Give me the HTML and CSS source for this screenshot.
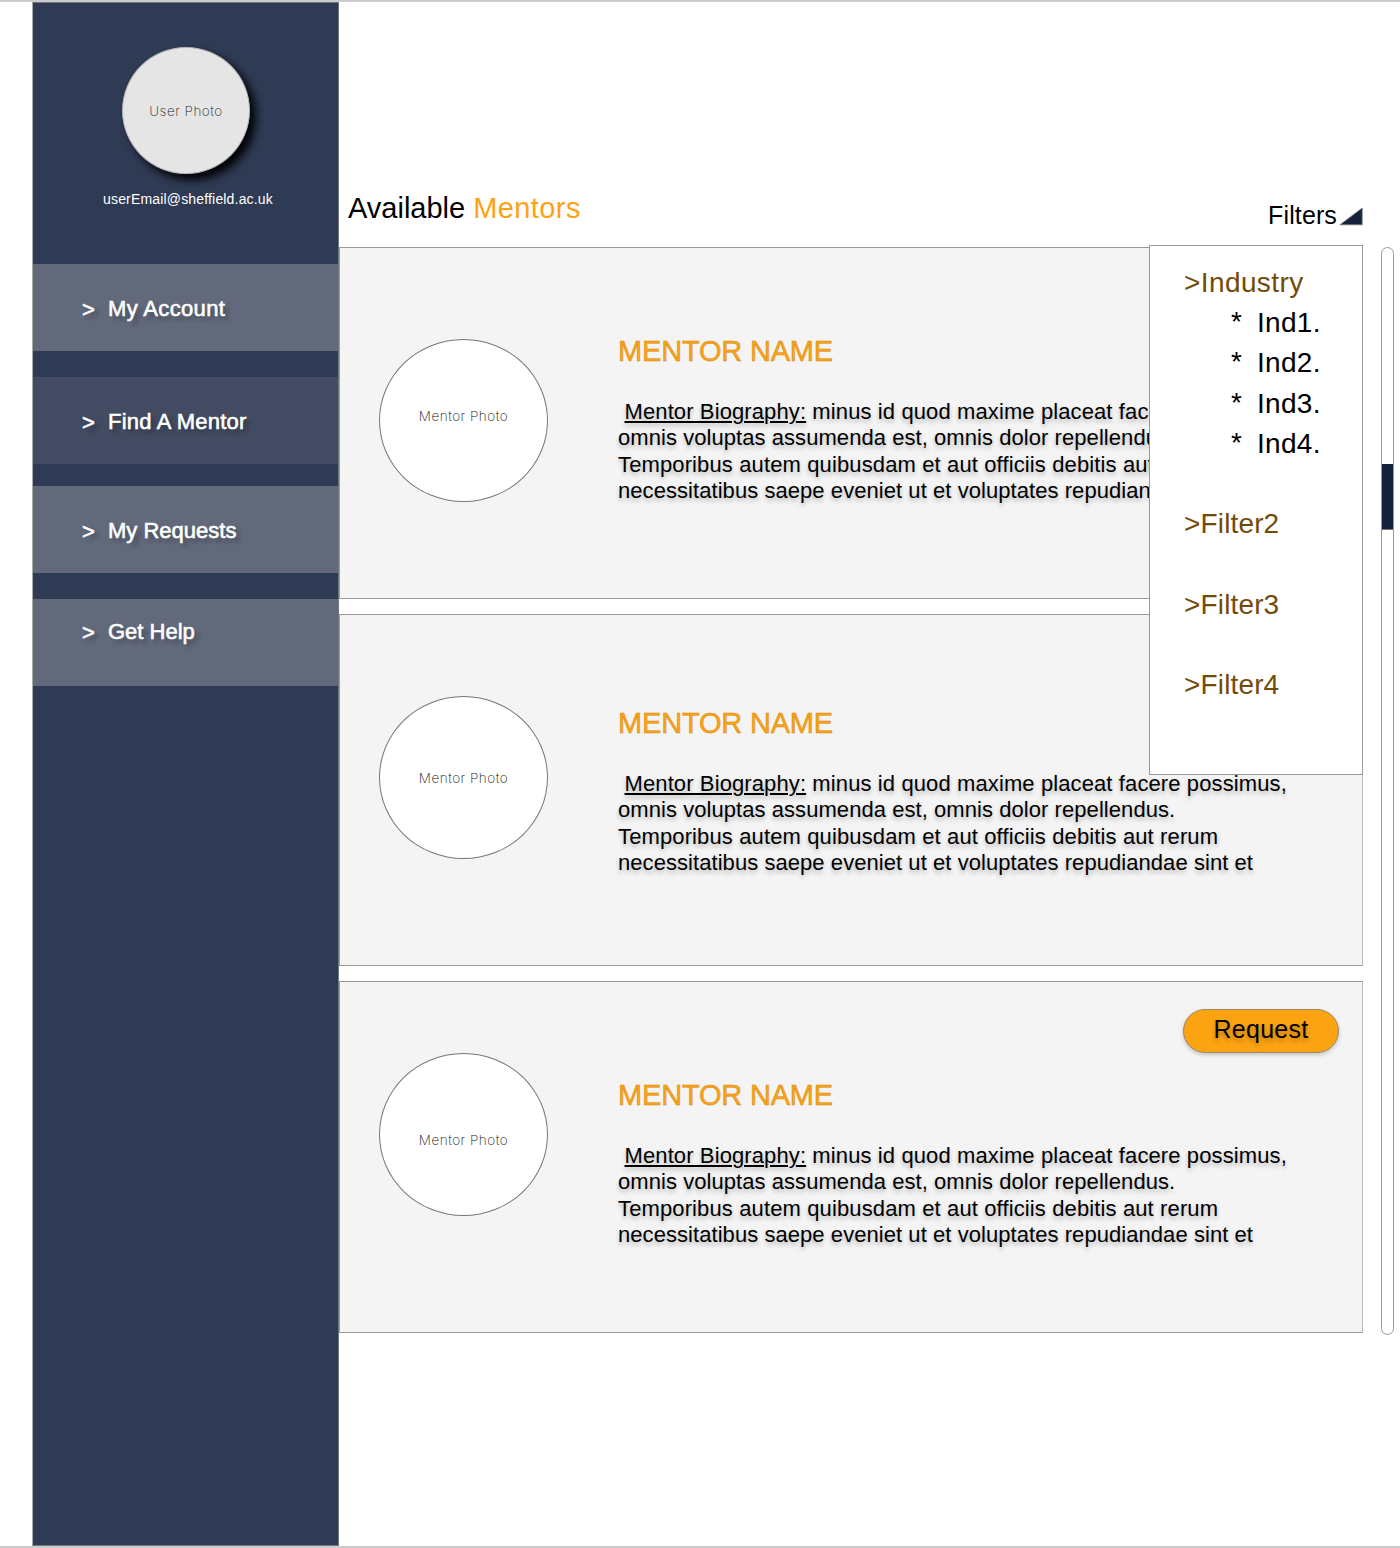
FILE: index.html
```html
<!DOCTYPE html>
<html lang="en">
<head>
<meta charset="utf-8">
<title>Available Mentors</title>
<link rel="stylesheet" href="styles.css">
</head>
<body>
<div class="page">
  <aside class="sidebar">
    <div class="user-photo"><span>User Photo</span></div>
    <div class="email">userEmail@sheffield.ac.uk</div>
    <nav class="nav">
      <a class="nav-item account"><span class="chevron">&gt;</span><span class="label">My Account</span></a>
      <a class="nav-item find"><span class="chevron">&gt;</span><span class="label">Find A Mentor</span></a>
      <a class="nav-item requests"><span class="chevron">&gt;</span><span class="label">My Requests</span></a>
      <a class="nav-item help"><span class="chevron">&gt;</span><span class="label">Get Help</span></a>
    </nav>
  </aside>
  <main class="main">
    <header class="header">
      <h1 class="title"><span class="title-first">Available</span> <span class="accent">Mentors</span></h1>
      <div class="filter-toggle"><span>Filters</span><svg class="triangle" width="24" height="19" viewBox="0 0 24 19"><path d="M1 17.8L23.2 1V17.8Z" fill="#15213d" stroke="#777" stroke-width=".8"/></svg></div>
    </header>
    <section class="cards">
      <article class="card first">
        <div class="mentor-photo"><span>Mentor Photo</span></div>
        <div class="info">
          <h2 class="name">MENTOR NAME</h2>
          <p class="bio"><span class="line l1"><u>Mentor Biography:</u> minus id quod maxime placeat facere possimus,</span><span class="line l2">omnis voluptas assumenda est, omnis dolor repellendus.</span><span class="line l3">Temporibus autem quibusdam et aut officiis debitis aut rerum</span><span class="line l4">necessitatibus saepe eveniet ut et voluptates repudiandae sint et</span></p>
        </div>
      </article>
      <article class="card second">
        <div class="mentor-photo"><span>Mentor Photo</span></div>
        <div class="info">
          <h2 class="name">MENTOR NAME</h2>
          <p class="bio"><span class="line l1"><u>Mentor Biography:</u> minus id quod maxime placeat facere possimus,</span><span class="line l2">omnis voluptas assumenda est, omnis dolor repellendus.</span><span class="line l3">Temporibus autem quibusdam et aut officiis debitis aut rerum</span><span class="line l4">necessitatibus saepe eveniet ut et voluptates repudiandae sint et</span></p>
        </div>
      </article>
      <article class="card third">
        <div class="mentor-photo"><span>Mentor Photo</span></div>
        <div class="info">
          <h2 class="name">MENTOR NAME</h2>
          <p class="bio"><span class="line l1"><u>Mentor Biography:</u> minus id quod maxime placeat facere possimus,</span><span class="line l2">omnis voluptas assumenda est, omnis dolor repellendus.</span><span class="line l3">Temporibus autem quibusdam et aut officiis debitis aut rerum</span><span class="line l4">necessitatibus saepe eveniet ut et voluptates repudiandae sint et</span></p>
        </div>
        <button class="request">Request</button>
      </article>
    </section>
    <div class="filter-menu">
      <div class="group industry">&gt;Industry</div>
      <ul class="options">
        <li><span class="star">*</span>Ind1.</li>
        <li><span class="star">*</span>Ind2.</li>
        <li><span class="star">*</span>Ind3.</li>
        <li><span class="star">*</span>Ind4.</li>
      </ul>
      <div class="group">&gt;Filter2</div>
      <div class="group">&gt;Filter3</div>
      <div class="group">&gt;Filter4</div>
    </div>
  </main>
  <div class="track"><div class="thumb"></div></div>
</div>
</body>
</html>
```
FILE: styles.css
```css
* { box-sizing: border-box; }
body {
  margin: 0;
  background: #fff;
  color: #000;
  font-family: "Liberation Sans", Arial, sans-serif;
}
.page {
  display: flex;
  width: 1400px;
  height: 1548px;
  padding-left: 32px;
  border-top: 2px solid #ccc;
  border-bottom: 2px solid #ccc;
  overflow: hidden;
}
.sidebar {
  width: 307px;
  flex: none;
  background: #2f3a54;
  border: 1px solid #74777d;
  border-left-color: #a9aaac;
}
.user-photo {
  width: 128px;
  height: 127px;
  margin: 44px 0 0 89px;
  border-radius: 50%;
  background: #e5e5e5;
  border: 1px solid #b5b5b5;
  box-shadow: 6px 6px 8px 0 #020406;
  display: flex;
  align-items: center;
  justify-content: center;
  font-family: Inter, sans-serif;
  font-weight: 200;
  font-size: 13.5px;
  letter-spacing: .5px;
  color: #222;
}
.email {
  margin: 16px 0 0 70px;
  font-size: 14px;
  letter-spacing: .17px;
  line-height: 18px;
  color: #fff;
  white-space: nowrap;
}
.nav { padding-top: 56px; }
.nav-item {
  display: flex;
  height: 87px;
  padding: 32px 0 0 49px;
  background: #61697b;
  color: #fff;
  font-size: 22px;
  line-height: 26px;
  text-shadow: 4px 4px 4px rgba(0, 0, 0, .3);
  -webkit-text-stroke: .6px #fff;
  white-space: nowrap;
}
.chevron { width: 26px; padding-top: 1px; }
.account .label { letter-spacing: .35px; }
.find { margin-top: 26px; background: #424b62; }
.find .label { letter-spacing: .22px; }
.requests { margin-top: 22px; }
.help { margin-top: 26px; padding-top: 20px; }
.main {
  position: relative;
  width: 1024px;
  flex: none;
}
.header {
  height: 245px;
  display: flex;
  justify-content: space-between;
  align-items: flex-start;
  padding: 188px 0 0 9px;
}
.title {
  margin: 0;
  font-size: 29px;
  font-weight: 400;
  line-height: 36px;
}
.accent { color: #ffa111; letter-spacing: .4px; }
.filter-toggle {
  display: flex;
  align-items: flex-start;
  padding-top: 10px;
  font-size: 25px;
  line-height: 30px;
  letter-spacing: .12px;
}
.triangle { margin: 7px 0 0 2px; }
.cards { display: grid; gap: 15px; }
.card {
  display: flex;
  position: relative;
  height: 352px;
  background: #f4f4f4;
  border: 1px solid #999;
  border-right-color: #bbb;
}
.mentor-photo {
  width: 169px;
  height: 163px;
  margin: 91px 70px 0 39px;
  border: 1px solid #777;
  border-radius: 50%;
  background: #fff;
  flex: none;
  text-align: center;
  font-family: Inter, sans-serif;
  font-weight: 200;
  font-size: 13.5px;
  letter-spacing: .5px;
  line-height: 20px;
  padding-top: 66px;
  color: #111;
}
.second .mentor-photo { margin-top: 81px; padding-top: 71px; }
.third .mentor-photo { margin-top: 71px; padding-top: 76px; }
.info { padding-top: 85px; }
.second .info { padding-top: 90px; }
.third .info { padding-top: 95px; }
.name {
  margin: 0;
  color: #fca311;
  font-size: 29px;
  font-weight: 400;
  letter-spacing: -.18px;
  line-height: 36px;
  -webkit-text-stroke: .5px #d58a1a;
  white-space: nowrap;
}
.bio {
  margin: 30px 0 0;
  font-size: 22px;
  line-height: 26.4px;
  text-shadow: 0 3px 4px rgba(0, 0, 0, .25);
  white-space: nowrap;
}
.line { display: block; }
.l1 { padding-left: 6.5px; letter-spacing: .11px; }
.l2 { letter-spacing: .06px; }
.l3 { letter-spacing: .125px; }
.l4 { letter-spacing: .06px; }
.bio u { text-decoration-thickness: 1.5px; text-underline-offset: 2px; }
.request {
  position: absolute;
  right: 23px;
  top: 27px;
  width: 156px;
  height: 44px;
  padding: 0 0 4px;
  border: 1px solid #9a8b6c;
  border-radius: 22px;
  background: #fca311;
  box-shadow: 0 2px 4px rgba(0, 0, 0, .2);
  color: #000;
  font-family: inherit;
  font-size: 25px;
  letter-spacing: .3px;
  text-shadow: 0 3px 4px rgba(0, 0, 0, .25);
}
.filter-menu {
  position: absolute;
  left: 810px;
  top: 243px;
  width: 214px;
  height: 530px;
  padding: 17px 0 0 34px;
  background: #fff;
  border: 1px solid #999;
  font-size: 28px;
  line-height: 40.2px;
  letter-spacing: .15px;
  white-space: nowrap;
}
.group { color: #744a08; margin-bottom: 40.2px; }
.industry { margin-bottom: 0; letter-spacing: .4px; }
.options {
  margin: 0 0 40.2px;
  padding: 0 0 0 47px;
  list-style: none;
}
.options li { display: flex; letter-spacing: .3px; }
.star { width: 26px; margin-top: -1px; }
.track {
  width: 13px;
  height: 1088px;
  margin: 245px 0 0 18px;
  padding-top: 216px;
  border: 1px solid #999;
  border-radius: 6.5px;
}
.thumb { height: 66px; background: #15213d; border-bottom: 1px solid #777; }
```
